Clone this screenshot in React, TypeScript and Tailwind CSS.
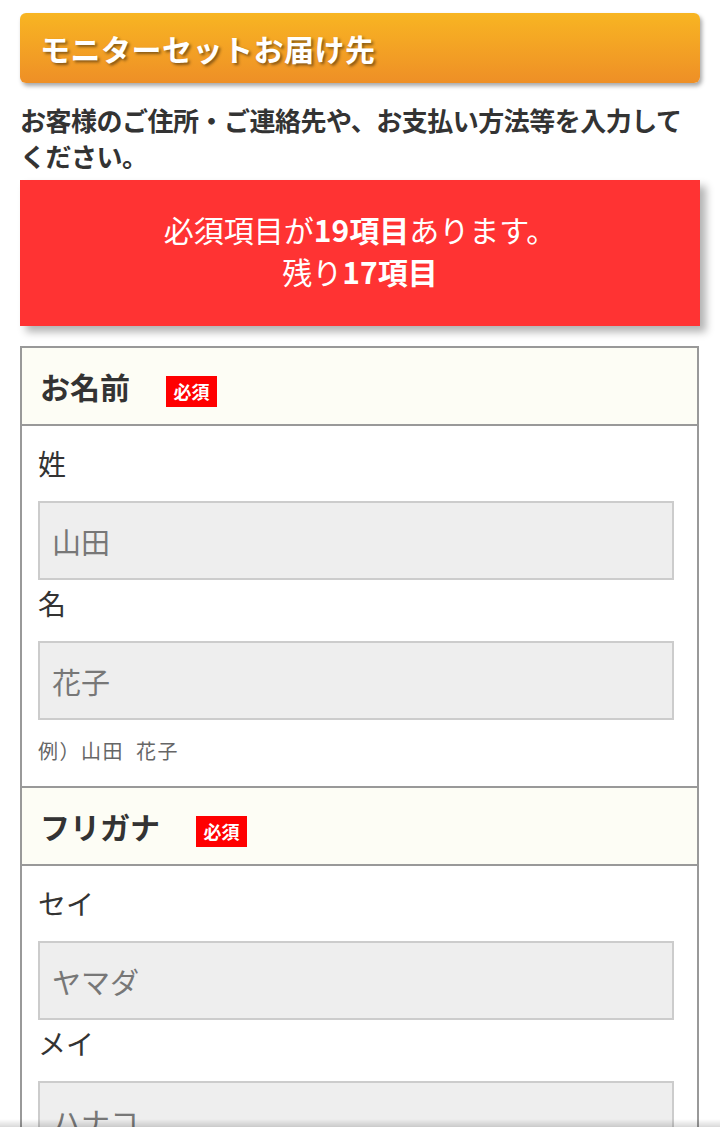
import React from 'react';

const font = "font-['Noto_Sans_CJK_JP','Noto_Sans',sans-serif]";

const Badge = () => (
  <span className="ml-[36px] mt-[10px] inline-flex h-[31px] w-[51px] items-center justify-center bg-[#ff0000] text-[18px] font-bold leading-none text-white">
    必須
  </span>
);

const SectionHead = ({ title }: { title: string }) => (
  <div className="flex h-[76px] items-center bg-[#fdfdf5] pl-[18px]">
    <span className="text-[30px] font-bold leading-none text-[#333]">{title}</span>
    <Badge />
  </div>
);

const Field = ({ label, placeholder }: { label: string; placeholder: string }) => (
  <div>
    <div className="mt-[3px] mb-[18px] text-[28px] leading-[40px] text-[#333]">{label}</div>
    <input
      readOnly
      placeholder={placeholder}
      className="block h-[79px] w-[636px] border-2 border-[#ccc] bg-[#eeeeee] px-[12px] text-[29px] text-[#333] outline-none placeholder:text-[#777]"
    />
  </div>
);

export default function App() {
  return (
    <div className={`${font} min-h-screen bg-white px-[20px] pt-[13px] pb-[40px]`}>
      {/* 見出し */}
      <div className="flex h-[70px] w-[680px] items-center rounded-[6px] bg-gradient-to-b from-[#f8b522] to-[#ee8f26] pl-[20px] shadow-[2px_3px_4px_rgba(0,0,0,0.35)]">
        <h1 className="text-[30px] font-bold leading-none tracking-[0.5px] text-white [text-shadow:2px_2px_3px_rgba(0,0,0,0.45)]">
          モニターセットお届け先
        </h1>
      </div>

      <p className="mt-[19px] text-[26px] font-bold leading-[36px] tracking-[-0.5px] text-[#333]">
        お客様のご住所・ご連絡先や、お支払い方法等を入力してください。
      </p>

      {/* 残り項目 */}
      <div className="mt-[6px] flex h-[146px] w-[680px] flex-col items-center justify-center bg-[#ff3333] pb-[6px] text-[30px] leading-[42px] text-white shadow-[6px_6px_8px_rgba(0,0,0,0.3)]">
        <div>
          必須項目が<span className="font-bold">19項目</span>あります。
        </div>
        <div>
          残り<span className="font-bold">17項目</span>
        </div>
      </div>

      {/* フォーム */}
      <div className="mt-[20px] w-[679px] border-2 border-[#999]">
        <SectionHead title="お名前" />
        <div className="border-t-2 border-[#999] px-[16px] pt-[14px] pb-[20px]">
          <Field label="姓" placeholder="山田" />
          <Field label="名" placeholder="花子" />
          <div className="mt-[16px] text-[20px] leading-[30px] tracking-[1.5px] text-[#666]">例）山田&nbsp;&nbsp;花子</div>
        </div>
        <div className="border-t-2 border-[#999]">
          <SectionHead title="フリガナ" />
        </div>
        <div className="border-t-2 border-[#999] px-[16px] pt-[14px] pb-[20px]">
          <Field label="セイ" placeholder="ヤマダ" />
          <Field label="メイ" placeholder="ハナコ" />
          <div className="mt-[16px] text-[20px] leading-[30px] tracking-[1.5px] text-[#666]">例）ヤマダ&nbsp;&nbsp;ハナコ</div>
        </div>
      </div>

      <div className="pointer-events-none fixed inset-x-0 bottom-0 h-[8px] bg-gradient-to-t from-black/15 to-transparent" />
    </div>
  );
}
